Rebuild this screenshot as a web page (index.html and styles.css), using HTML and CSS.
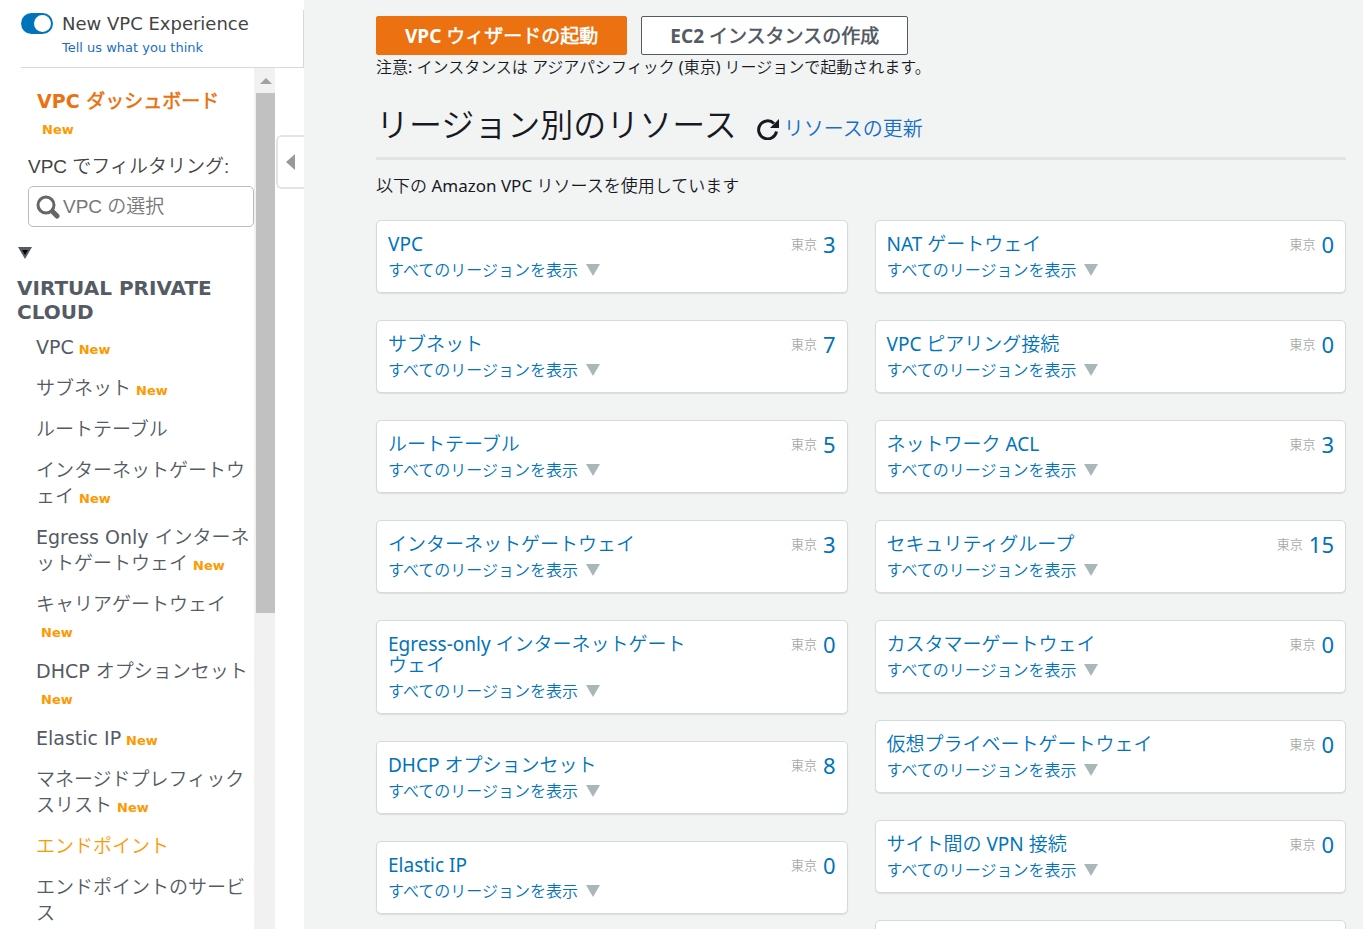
FILE: index.html
```html
<!DOCTYPE html>
<html lang="ja">
<head>
    <meta charset="UTF-8">
    <meta name="viewport" content="width=device-width, initial-scale=1.0">
    <title>VPC ダッシュボード</title>
    <link rel="stylesheet" href="styles.css">
</head>
<body>
    <aside class="sidebar">
        <div class="experience">
            <input type="checkbox" id="new-experience" class="toggle" checked>
            <div class="experience-text">
                <label for="new-experience">New VPC Experience</label>
                <a href="#">Tell us what you think</a>
            </div>
        </div>

        <div class="sidebar-body">
            <nav class="nav">
                <a href="#" class="dashboard">VPC ダッシュボード<span class="new">New</span></a>

                <label for="vpc-filter" class="filter-label">VPC でフィルタリング:</label>
                <div class="filter-box">
                    <svg class="search-icon" width="24" height="24" viewBox="0 0 24 24">
                        <circle cx="10" cy="10" r="8" fill="none" stroke="#666" stroke-width="3"/>
                        <path d="M17 17l4 4" stroke="#666" stroke-width="5" stroke-linecap="round"/>
                    </svg>
                    <input type="text" id="vpc-filter" placeholder="VPC の選択">
                </div>

                <button class="section-toggle" aria-expanded="true" aria-label="Virtual Private Cloud">
                    <svg width="14" height="12" viewBox="0 0 14 12">
                        <path d="M0 0h14l-7 12z" fill="#545b64"/>
                        <path d="M4 3h6l-3 5z" fill="#000"/>
                    </svg>
                </button>
                <h2>VIRTUAL PRIVATE CLOUD</h2>
                <ul class="nav-list">
                    <li><a href="#">VPC<span class="new">New</span></a></li>
                    <li><a href="#">サブネット<span class="new">New</span></a></li>
                    <li><a href="#">ルートテーブル</a></li>
                    <li><a href="#">インターネットゲートウェイ<span class="new">New</span></a></li>
                    <li><a href="#">Egress Only インターネットゲートウェイ<span class="new">New</span></a></li>
                    <li><a href="#">キャリアゲートウェイ<span class="new">New</span></a></li>
                    <li><a href="#">DHCP オプションセット<span class="new">New</span></a></li>
                    <li><a href="#">Elastic IP<span class="new">New</span></a></li>
                    <li><a href="#">マネージドプレフィックスリスト<span class="new">New</span></a></li>
                    <li><a href="#" class="active">エンドポイント</a></li>
                    <li><a href="#">エンドポイントのサービス</a></li>
                </ul>
            </nav>

            <div class="scrollbar">
                <svg class="scroll-up" width="12" height="6" viewBox="0 0 12 6"><path d="M6 0l6 6H0z" fill="#a0a0a0"/></svg>
                <div class="scroll-thumb"></div>
            </div>

            <button class="collapse" aria-label="Collapse">
                <svg width="9" height="16" viewBox="0 0 9 16"><path d="M9 0v16L0 8z" fill="#999"/></svg>
            </button>
        </div>
    </aside>

    <main class="content">
        <div class="actions">
            <button class="btn btn-primary">VPC ウィザードの起動</button>
            <button class="btn">EC2 インスタンスの作成</button>
        </div>
        <p class="note">注意: インスタンスは アジアパシフィック (東京) リージョンで起動されます。</p>

        <div class="heading">
            <h1>リージョン別のリソース</h1>
            <a href="#" class="refresh">
                <svg width="22" height="22" viewBox="0 0 22 22">
                    <path d="M17 5.500A9 9 0 1 0 19.500 13.500" fill="none" stroke="#16191f" stroke-width="3"/>
                    <path d="M22 1v9h-9z" fill="#16191f"/>
                </svg>
                <span>リソースの更新</span>
            </a>
        </div>

        <p class="intro">以下の Amazon VPC リソースを使用しています</p>

        <div class="resources">
            <div class="column">
                <section class="card">
                    <a href="#" class="name">VPC</a>
                    <div class="count"><span>東京</span><a href="#">3</a></div>
                    <a href="#" class="show-all">すべてのリージョンを表示<i class="arrow"></i></a>
                </section>
                <section class="card">
                    <a href="#" class="name">サブネット</a>
                    <div class="count"><span>東京</span><a href="#">7</a></div>
                    <a href="#" class="show-all">すべてのリージョンを表示<i class="arrow"></i></a>
                </section>
                <section class="card">
                    <a href="#" class="name">ルートテーブル</a>
                    <div class="count"><span>東京</span><a href="#">5</a></div>
                    <a href="#" class="show-all">すべてのリージョンを表示<i class="arrow"></i></a>
                </section>
                <section class="card">
                    <a href="#" class="name">インターネットゲートウェイ</a>
                    <div class="count"><span>東京</span><a href="#">3</a></div>
                    <a href="#" class="show-all">すべてのリージョンを表示<i class="arrow"></i></a>
                </section>
                <section class="card">
                    <a href="#" class="name">Egress-only インターネットゲートウェイ</a>
                    <div class="count"><span>東京</span><a href="#">0</a></div>
                    <a href="#" class="show-all">すべてのリージョンを表示<i class="arrow"></i></a>
                </section>
                <section class="card">
                    <a href="#" class="name">DHCP オプションセット</a>
                    <div class="count"><span>東京</span><a href="#">8</a></div>
                    <a href="#" class="show-all">すべてのリージョンを表示<i class="arrow"></i></a>
                </section>
                <section class="card">
                    <a href="#" class="name">Elastic IP</a>
                    <div class="count"><span>東京</span><a href="#">0</a></div>
                    <a href="#" class="show-all">すべてのリージョンを表示<i class="arrow"></i></a>
                </section>
            </div>
            <div class="column">
                <section class="card">
                    <a href="#" class="name">NAT ゲートウェイ</a>
                    <div class="count"><span>東京</span><a href="#">0</a></div>
                    <a href="#" class="show-all">すべてのリージョンを表示<i class="arrow"></i></a>
                </section>
                <section class="card">
                    <a href="#" class="name">VPC ピアリング接続</a>
                    <div class="count"><span>東京</span><a href="#">0</a></div>
                    <a href="#" class="show-all">すべてのリージョンを表示<i class="arrow"></i></a>
                </section>
                <section class="card">
                    <a href="#" class="name">ネットワーク ACL</a>
                    <div class="count"><span>東京</span><a href="#">3</a></div>
                    <a href="#" class="show-all">すべてのリージョンを表示<i class="arrow"></i></a>
                </section>
                <section class="card">
                    <a href="#" class="name">セキュリティグループ</a>
                    <div class="count"><span>東京</span><a href="#">15</a></div>
                    <a href="#" class="show-all">すべてのリージョンを表示<i class="arrow"></i></a>
                </section>
                <section class="card">
                    <a href="#" class="name">カスタマーゲートウェイ</a>
                    <div class="count"><span>東京</span><a href="#">0</a></div>
                    <a href="#" class="show-all">すべてのリージョンを表示<i class="arrow"></i></a>
                </section>
                <section class="card">
                    <a href="#" class="name">仮想プライベートゲートウェイ</a>
                    <div class="count"><span>東京</span><a href="#">0</a></div>
                    <a href="#" class="show-all">すべてのリージョンを表示<i class="arrow"></i></a>
                </section>
                <section class="card">
                    <a href="#" class="name">サイト間の VPN 接続</a>
                    <div class="count"><span>東京</span><a href="#">0</a></div>
                    <a href="#" class="show-all">すべてのリージョンを表示<i class="arrow"></i></a>
                </section>
                <section class="card"></section>
            </div>
        </div>
    </main>
</body>
</html>
```

FILE: styles.css
```css
* {
    box-sizing: border-box;
}
body {
    margin: 0;
    height: 100vh;
    display: flex;
    overflow: hidden;
    background-color: #f2f3f3;
    color: #16191f;
    font-family: "Noto Sans", "Noto Sans CJK JP DemiLight", "Noto Sans CJK JP", sans-serif;
    font-size: 16px;
}
a {
    color: #0073bb;
    text-decoration: none;
}
h1, h2, p, ul {
    margin: 0;
    padding: 0;
}
button {
    font-family: inherit;
    cursor: pointer;
}

/* sidebar */
.sidebar {
    flex: none;
    width: 304px;
    display: flex;
    flex-direction: column;
    background-color: #fff;
    color: #444;
    font-family: "DejaVu Sans", "Noto Sans CJK JP DemiLight", "Noto Sans CJK JP", sans-serif;
}
.experience {
    display: flex;
    flex: none;
    gap: 9px;
    margin: 10px 0 0 21px;
    height: 58px;
    border-right: 1px solid #d5dbdb;
    border-bottom: 1px solid #d5dbdb;
}
.toggle {
    appearance: none;
    flex: none;
    width: 32px;
    height: 21px;
    margin: 3px 0 0;
    padding: 2px;
    border-radius: 11px;
    background-color: #0073bb;
}
.toggle::before {
    content: "";
    display: block;
    width: 17px;
    height: 17px;
    border-radius: 50%;
    background-color: #fff;
}
.toggle:checked::before {
    margin-left: 11px;
}
.experience-text {
    display: flex;
    flex-direction: column;
    font-size: 18px;
    line-height: 27px;
}
.experience-text a {
    color: #1b6ec2;
    font-size: 13px;
    line-height: 21px;
}
.sidebar-body {
    flex: 1;
    min-height: 0;
    display: flex;
    align-items: flex-start;
}
.nav {
    flex: 1;
    min-width: 0;
    padding: 20px 0 0 17px;
    font-size: 19px;
    line-height: 26px;
}
.dashboard {
    display: block;
    margin: 0 0 14px 20px;
    color: #ec7211;
    font-weight: bold;
}
.new {
    display: inline-block;
    margin-left: 5px;
    color: #ff9900;
    font-size: 13px;
    font-weight: bold;
    line-height: 16px;
}
.filter-label {
    display: block;
    margin-left: 11px;
    font-family: "Liberation Sans", "Noto Sans CJK JP DemiLight", "Noto Sans CJK JP", sans-serif;
}
.filter-box {
    display: flex;
    align-items: center;
    gap: 3px;
    height: 41px;
    margin: 6px 0 0 11px;
    padding: 0 7px;
    border: 1px solid #bbb;
    border-radius: 5px;
}
.search-icon {
    flex: none;
}
.filter-box input {
    flex: 1;
    min-width: 0;
    padding: 0;
    border: none;
    outline: none;
    font-family: "Liberation Sans", "Noto Sans CJK JP DemiLight", "Noto Sans CJK JP", sans-serif;
    font-size: 19px;
}
.filter-box input::placeholder {
    color: #777;
}
.section-toggle {
    display: flex;
    margin: 20px 0 0 1px;
    padding: 0;
    border: none;
    background: none;
}
h2 {
    margin-top: 17px;
    color: #545b64;
    font-size: 20px;
    line-height: 24px;
}
.nav-list {
    display: flex;
    flex-direction: column;
    gap: 15px;
    margin: 10px 0 0 19px;
    list-style: none;
    line-break: loose;
}
.nav-list li {
    line-height: 26px;
}
.nav-list a {
    display: block;
    color: #545b64;
}
.nav-list .active {
    color: #ff9900;
}
.scrollbar {
    flex: none;
    width: 21px;
    align-self: stretch;
    padding: 10px 0 0 2px;
    background-color: #f1f1f1;
}
.scroll-up {
    display: block;
    margin: 0 0 9px 4px;
}
.scroll-thumb {
    height: 520px;
    background-color: #c1c1c1;
}
.collapse {
    flex: none;
    width: 28px;
    height: 54px;
    margin: 67px 0 0 1px;
    padding: 0 0 0 8px;
    border: 2px solid #e3e5e5;
    border-right: none;
    border-radius: 6px 0 0 6px;
    background-color: #fff;
    text-align: left;
}
.collapse svg {
    display: block;
}

/* main area */
.content {
    flex: 1;
    min-width: 0;
    padding: 16px 17px 0 72px;
}
.actions {
    display: flex;
    gap: 14px;
}
.btn {
    height: 39px;
    padding: 0 28px;
    border: 1px solid #545b64;
    border-radius: 2px;
    background-color: #fff;
    color: #545b64;
    font-size: 19px;
    font-weight: bold;
    line-height: 24px;
}
.btn-primary {
    border-color: #ec7211;
    background-color: #ec7211;
    color: #fff;
}
.note {
    line-height: 24px;
}
.heading {
    display: flex;
    align-items: flex-end;
    gap: 20px;
    padding: 22px 0 8px;
    border-bottom: 3px solid #e1e4e4;
}
h1 {
    font-size: 33px;
    font-weight: 300;
    line-height: 48px;
}
.refresh {
    display: flex;
    align-items: center;
    gap: 5px;
    color: #146eca;
    font-size: 20px;
    line-height: 40px;
}
.intro {
    margin: 14px 0 22px;
    font-size: 17px;
    line-height: 24px;
}
.resources {
    display: grid;
    grid-template-columns: 1fr 1fr;
    gap: 27px;
}
.column {
    display: flex;
    flex-direction: column;
    gap: 27px;
}
.card {
    display: grid;
    grid-template-columns: 67% 1fr;
    row-gap: 3px;
    min-height: 73px;
    padding: 13px 11px 10px;
    border: 1px solid #d5dbdb;
    border-radius: 5px;
    background-color: #fff;
    box-shadow: 0 1px 1px rgba(0, 28, 36, 0.1);
}
.name {
    font-size: 19px;
    line-height: 21px;
}
.count {
    display: flex;
    justify-content: flex-end;
    align-items: center;
    gap: 6px;
    height: 21px;
    color: #aaa;
    font-size: 13px;
    line-height: 21px;
}
.count a {
    font-size: 22px;
}
.show-all {
    grid-column: 1 / 3;
    justify-self: start;
    display: flex;
    align-items: center;
    gap: 8px;
    line-height: 24px;
}
.arrow {
    border: 7px solid transparent;
    border-top: 12px solid #aab7b8;
    border-bottom: none;
}
```
